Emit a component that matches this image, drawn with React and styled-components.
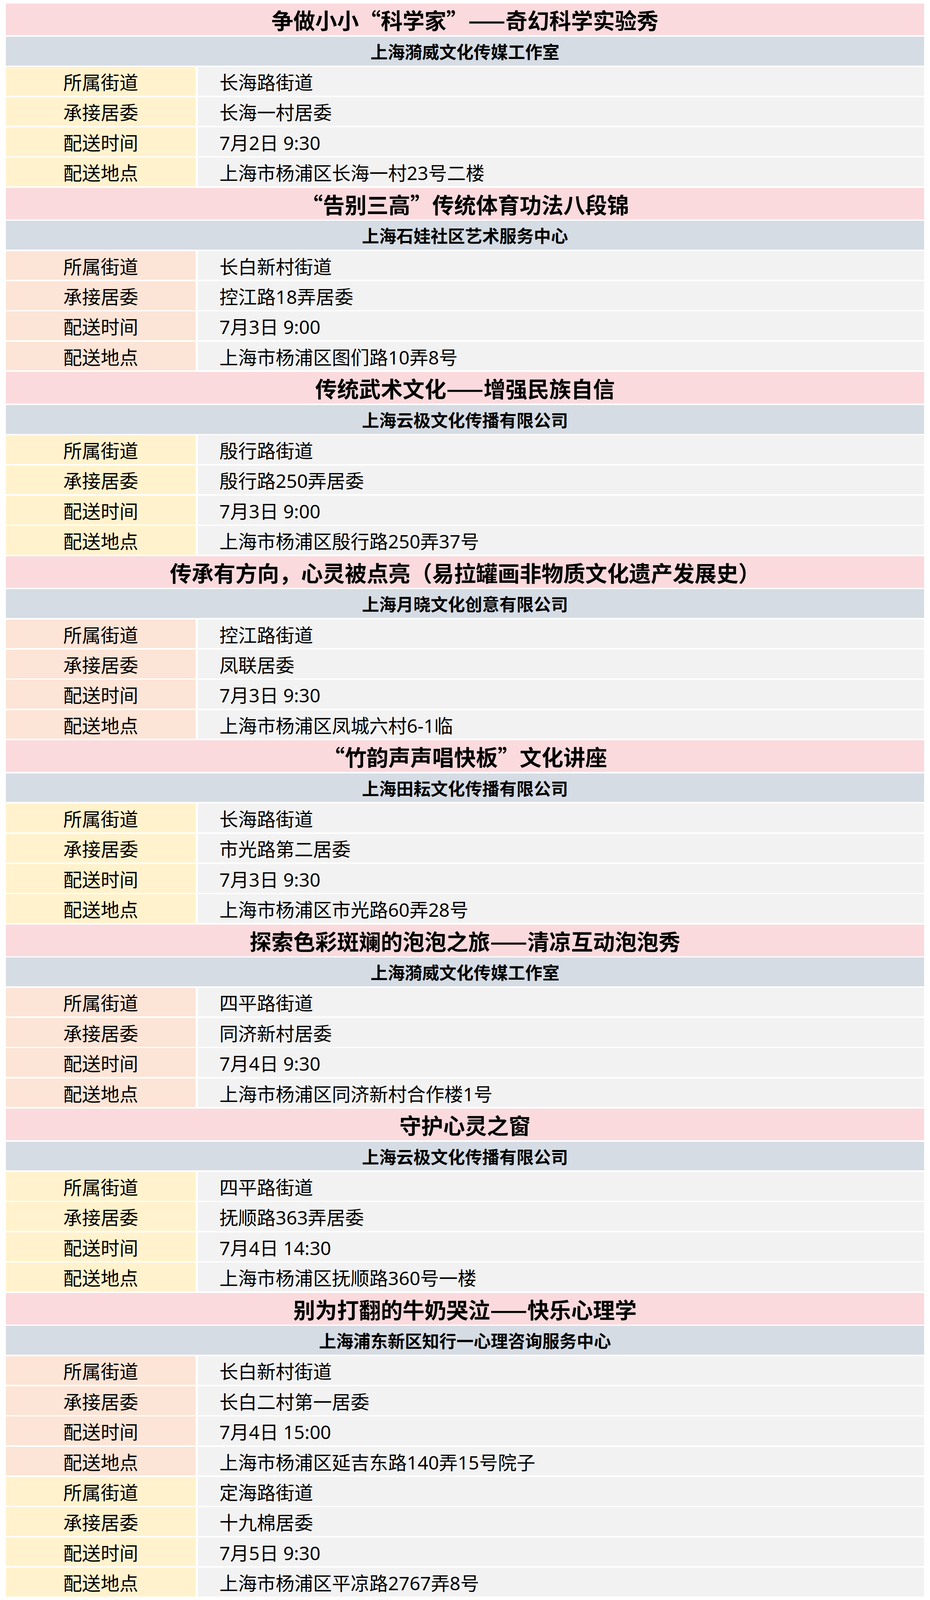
import React from 'react'
import styled, { createGlobalStyle } from 'styled-components'

const GlobalStyle = createGlobalStyle`
  html, body {
    margin: 0;
    padding: 0;
    background: #ffffff;
  }
  body {
    font-family: "Noto Sans", "Noto Sans CJK SC", sans-serif;
    color: #000;
  }
`

// rows share the window height, so the whole sheet stays on screen
const Sheet = styled.div`
  box-sizing: border-box;
  height: 100vh;
  display: grid;
  grid-template-columns: 486px 1fr;
  grid-auto-rows: 1fr;
  column-gap: 6px;
  row-gap: 0.09vh;
  padding: 0.225vh 15px;
  background: #ffffff;
`

const TitleCell = styled.div`
  grid-column: 1 / -1;
  display: flex;
  align-items: center;
  justify-content: center;
  background: #fadadd;
  font-family: "Noto Sans CJK SC", sans-serif;
  font-size: 56px;
  font-weight: 700;
  white-space: nowrap;
`

const OrgCell = styled.div`
  grid-column: 1 / -1;
  display: flex;
  align-items: center;
  justify-content: center;
  background: #d6dce4;
  font-family: "Noto Sans CJK SC", sans-serif;
  font-size: 44px;
  font-weight: 700;
  white-space: nowrap;
`

const LabelCell = styled.div`
  display: flex;
  align-items: center;
  justify-content: center;
  background: ${props => props.tone === 'peach' ? '#fce4d6' : '#fff2cc'};
  font-size: 48px;
`

const ValueCell = styled.div`
  display: flex;
  align-items: center;
  padding-left: 55px;
  background: #f2f2f2;
  font-size: 48px;
  white-space: nowrap;
`

const LABELS = ['所属街道', '承接居委', '配送时间', '配送地点']

const events = [
  {
    title: '争做小小“科学家”——奇幻科学实验秀',
    org: '上海漪威文化传媒工作室',
    stops: [{ tone: 'yellow', values: ['长海路街道', '长海一村居委', '7月2日 9:30', '上海市杨浦区长海一村23号二楼'] }],
  },
  {
    title: '“告别三高”传统体育功法八段锦',
    org: '上海石娃社区艺术服务中心',
    stops: [{ tone: 'peach', values: ['长白新村街道', '控江路18弄居委', '7月3日 9:00', '上海市杨浦区图们路10弄8号'] }],
  },
  {
    title: '传统武术文化——增强民族自信',
    org: '上海云极文化传播有限公司',
    stops: [{ tone: 'yellow', values: ['殷行路街道', '殷行路250弄居委', '7月3日 9:00', '上海市杨浦区殷行路250弄37号'] }],
  },
  {
    title: '传承有方向，心灵被点亮（易拉罐画非物质文化遗产发展史）',
    org: '上海月晓文化创意有限公司',
    stops: [{ tone: 'peach', values: ['控江路街道', '凤联居委', '7月3日 9:30', '上海市杨浦区凤城六村6-1临'] }],
  },
  {
    title: '“竹韵声声唱快板”文化讲座',
    org: '上海田耘文化传播有限公司',
    stops: [{ tone: 'yellow', values: ['长海路街道', '市光路第二居委', '7月3日 9:30', '上海市杨浦区市光路60弄28号'] }],
  },
  {
    title: '探索色彩斑斓的泡泡之旅——清凉互动泡泡秀',
    org: '上海漪威文化传媒工作室',
    stops: [{ tone: 'peach', values: ['四平路街道', '同济新村居委', '7月4日 9:30', '上海市杨浦区同济新村合作楼1号'] }],
  },
  {
    title: '守护心灵之窗',
    org: '上海云极文化传播有限公司',
    stops: [{ tone: 'yellow', values: ['四平路街道', '抚顺路363弄居委', '7月4日 14:30', '上海市杨浦区抚顺路360号一楼'] }],
  },
  {
    title: '别为打翻的牛奶哭泣——快乐心理学',
    org: '上海浦东新区知行一心理咨询服务中心',
    stops: [
      { tone: 'peach', values: ['长白新村街道', '长白二村第一居委', '7月4日 15:00', '上海市杨浦区延吉东路140弄15号院子'] },
      { tone: 'yellow', values: ['定海路街道', '十九棉居委', '7月5日 9:30', '上海市杨浦区平凉路2767弄8号'] },
    ],
  },
]

function Stop(props) {
  return (
    <>
      {LABELS.map((label, i) => (
        <React.Fragment key={label}>
          <LabelCell tone={props.tone}>{label}</LabelCell>
          <ValueCell>{props.values[i]}</ValueCell>
        </React.Fragment>
      ))}
    </>
  )
}

function Event(props) {
  return (
    <>
      <TitleCell>{props.title}</TitleCell>
      <OrgCell>{props.org}</OrgCell>
      {props.stops.map((stop, i) => (
        <Stop key={i} tone={stop.tone} values={stop.values} />
      ))}
    </>
  )
}

export default function App() {
  return (
    <>
      <GlobalStyle />
      <Sheet>
        {events.map((ev, i) => (
          <Event key={i} title={ev.title} org={ev.org} stops={ev.stops} />
        ))}
      </Sheet>
    </>
  )
}
